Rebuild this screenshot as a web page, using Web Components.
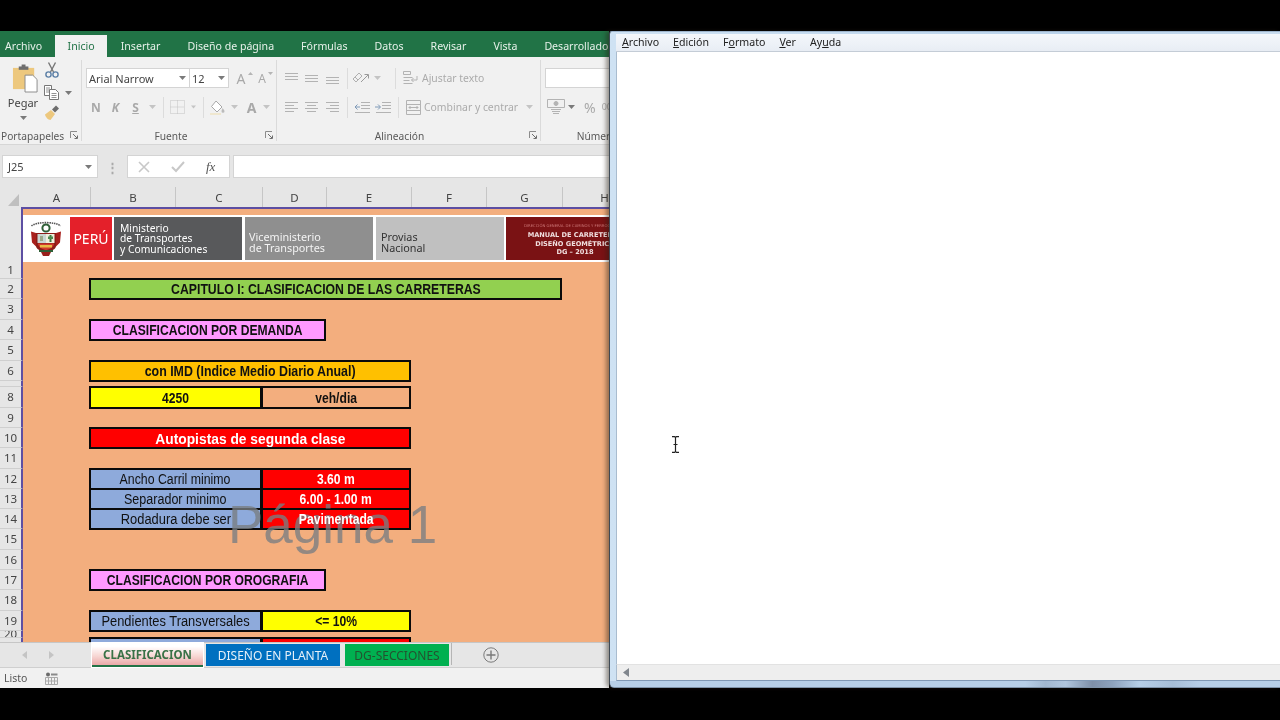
<!DOCTYPE html>
<html lang="es"><head><meta charset="utf-8"><title>Excel y Bloc de notas</title>
<style>
html,body{margin:0;padding:0;background:#000;width:1280px;height:720px;overflow:hidden}
</style></head><body>
<script>
const UI='"Noto Sans","Open Sans",sans-serif';
const ICONS={
paste:`<svg width="27" height="29" viewBox="0 0 28 30"><path d="M1 4h22v22H1z" fill="#edc87e"/><path d="M7 2.500h10v3.500H7z" fill="#6e6e6e"/><path d="M10 .5h4v3h-4z" fill="#6e6e6e"/><path d="M13.500 11.500h8l4.500 4.500v13h-12.500z" fill="#fff" stroke="#8a8a8a"/></svg>`,
cut:`<svg width="16" height="16" viewBox="0 0 16 16" fill="none" stroke="#5b7fa6" stroke-width="1.400"><path d="M4.500 .5 9.500 10M11.500 .5 6.500 10" stroke="#777"/><circle cx="4.500" cy="12.500" r="2.600"/><circle cx="11.500" cy="12.500" r="2.600"/></svg>`,
copy:`<svg width="15" height="15" viewBox="0 0 15 15" fill="#fff" stroke="#777"><path d="M.5.500h7v10h-7z"/><path d="M5.500 4.500h6l3 3v7h-9z"/><path d="M2 3h4M2 5h3M2 7h3M7.500 8.500h5M7.500 10.500h5M7.500 12.500h5" stroke-width=".8"/></svg>`,
brush:`<svg width="16" height="16" viewBox="0 0 16 16"><path d="M1 9.500 7 5l4 4-4.500 6C4 15 1.500 12 1 9.500z" fill="#edc87e"/><path d="M8 4.500l4-4 3 3-4 4z" fill="#6d6d6d"/></svg>`,
launch:`<svg width="8" height="8" viewBox="0 0 8 8" fill="none" stroke="#8c8c8c"><path d="M.5 7V.5H7"/><path d="M3 3l4 4M4.500 7.500h3v-3" stroke="#6e6e6e"/></svg>`,
al1:`<svg width="15" height="13" viewBox="0 0 15 13" stroke="#b3b3b3"><path d="M1 1.500h13M1 4.500h13M1 7.500h13"/></svg>`,
al2:`<svg width="15" height="13" viewBox="0 0 15 13" stroke="#b3b3b3"><path d="M1 3.500h13M1 6.500h13M1 9.500h13"/></svg>`,
al3:`<svg width="15" height="13" viewBox="0 0 15 13" stroke="#b3b3b3"><path d="M1 5.500h13M1 8.500h13M1 11.500h13"/></svg>`,
hl:`<svg width="15" height="13" viewBox="0 0 15 13" stroke="#b3b3b3"><path d="M1 1.500h13M1 4.500h9M1 7.500h13M1 10.500h9"/></svg>`,
hc:`<svg width="15" height="13" viewBox="0 0 15 13" stroke="#b3b3b3"><path d="M1 1.500h13M3 4.500h9M1 7.500h13M3 10.500h9"/></svg>`,
hr:`<svg width="15" height="13" viewBox="0 0 15 13" stroke="#b3b3b3"><path d="M1 1.500h13M5 4.500h9M1 7.500h13M5 10.500h9"/></svg>`,
orient:`<svg width="18" height="14" viewBox="0 0 18 14" fill="none" stroke="#b0b0b0"><path d="M1 8l6-6 3 3-6 6zM3 6l3 3"/><path d="M9 11l7-7M12.500 3.500h4v4" stroke="#9a9a9a"/></svg>`,
outd:`<svg width="16" height="13" viewBox="0 0 16 13" stroke="#b3b3b3" fill="none"><path d="M7 1.500h9M7 4.500h9M7 7.500h9M1 11.500h15"/><path d="M6 6H1M3.500 3.500 1 6l2.500 2.500" stroke="#7f9ab8"/></svg>`,
ind:`<svg width="16" height="13" viewBox="0 0 16 13" stroke="#b3b3b3" fill="none"><path d="M7 1.500h9M7 4.500h9M7 7.500h9M1 11.500h15"/><path d="M0 6h5M3 3.500 5.500 6 3 8.500" stroke="#7f9ab8"/></svg>`,
wrap:`<svg width="15" height="15" viewBox="0 0 15 15" fill="none" stroke="#b3b3b3"><path d="M.5 .5h7v3h-7zM.5 6.500h9M.5 9.500h6M.5 12.500h9M14 5v4H8.500M10.500 7 8.500 9l2 2"/></svg>`,
merge:`<svg width="15" height="15" viewBox="0 0 15 15" fill="none" stroke="#b3b3b3"><path d="M.5.500h14v14H.5zM.5 4.500h14M.5 10.500h14M3 7.500h9M4.500 6 3 7.500 4.500 9M10.500 6 12 7.500 10.500 9"/></svg>`,
acct:`<svg width="18" height="16" viewBox="0 0 18 16" fill="none" stroke="#b3b3b3"><path d="M.5.500h17v8H.5z"/><circle cx="9" cy="4.500" r="2" fill="#b3b3b3"/><path d="M4 10.500h10M5 12.500h8M6 14.500h6"/></svg>`,
border:`<svg width="15" height="14" viewBox="0 0 15 14" fill="none" stroke="#c2c2c2" stroke-dasharray="1 1"><path d="M.5.500h14v13H.5zM.5 7h14M7.500.500v13"/></svg>`,
fill:`<svg width="16" height="15" viewBox="0 0 16 15" fill="none"><path d="M6 1 1.500 6.500 7 12l5-5z" fill="#fff" stroke="#a8a8a8"/><path d="M12.500 8c1.500 1.800 2 2.600 2 3.300a1.500 1.500 0 0 1-3 0c0-.7.500-1.500 1-3.300z" fill="#bbb"/><path d="M0 13h11v2H0z" fill="#efe7cf"/></svg>`,
stats:`<svg width="13" height="13" viewBox="0 0 13 13" fill="none"><path d="M.5 5.500h12v7H.5zM3.500 5.500v7M6.500 5.500v7M9.500 5.500v7M.5 9h12" stroke="#a9a9a9"/><circle cx="3" cy="2.500" r="2" fill="#6b6b6b"/><path d="M6 1.500h6.500v2H6z" fill="#8a8a8a"/></svg>`,
plus:`<svg width="16" height="16" viewBox="0 0 16 16" fill="none" stroke="#7a7a7a"><circle cx="8" cy="8" r="7.200"/><path d="M8 3.500v9M3.500 8h9" stroke-width="1.400"/></svg>`,
check:`<svg width="14" height="12" viewBox="0 0 14 12" fill="none" stroke="#c8c8c8" stroke-width="2"><path d="M1 6l4 4 8-9"/></svg>`,
cross:`<svg width="12" height="12" viewBox="0 0 12 12" stroke="#c8c8c8" stroke-width="1.600"><path d="M1 1l10 10M11 1 1 11"/></svg>`,
caret:`<svg width="7" height="4" viewBox="0 0 7 4"><path d="M0 0h7L3.500 4z" fill="#7a7a7a"/></svg>`,
caretl:`<svg width="7" height="4" viewBox="0 0 7 4"><path d="M0 0h7L3.500 4z" fill="#c4c4c4"/></svg>`,
up:`<svg width="5" height="3" viewBox="0 0 5 3"><path d="M0 3h5L2.500 0z" fill="#b5b5b5"/></svg>`,
down:`<svg width="5" height="3" viewBox="0 0 5 3"><path d="M0 0h5L2.500 3z" fill="#b5b5b5"/></svg>`,
left:`<svg width="5" height="8" viewBox="0 0 5 8"><path d="M5 0v8L0 4z" fill="#c4c4c4"/></svg>`,
right:`<svg width="5" height="8" viewBox="0 0 5 8"><path d="M0 0v8l5-4z" fill="#c4c4c4"/></svg>`,
leftd:`<svg width="6" height="9" viewBox="0 0 6 9"><path d="M6 0v9L0 4.500z" fill="#80868d"/></svg>`,
corner:`<svg width="11" height="12" viewBox="0 0 11 12"><path d="M11 0v12H0z" fill="#bfbfbf"/></svg>`,
shield:`<svg width="32" height="38" viewBox="0 0 32 38">
<path d="M1.500 6C6 1.500 26 1.500 30.500 6" fill="none" stroke="#555" stroke-width="1.600" stroke-dasharray="1.500 .8"/>
<circle cx="16" cy="8" r="3.600" fill="none" stroke="#2e5e36" stroke-width="2"/>
<path d="M6 13 1 11.500l1 11 4.500 4.500zM26 13l5-1.500-1 11-4.500 4.500z" fill="#a8201d"/>
<path d="M6 13h20v13c0 3-4 5-10 6-6-1-10-3-10-6z" fill="#8c1c18"/>
<path d="M7.500 14H16v9H7.500z" fill="#c8d6d2"/><path d="M16 14h8.500v9H16z" fill="#eef0dc"/>
<path d="M10 16h3v5h-3z" fill="#9aa98a"/><path d="M19.500 15h2v7h-2z" fill="#3c7a45"/><path d="M18 16.500h5v2.500h-5z" fill="#4a8a4f"/>
<path d="M8 23.500h16c-.5 4-4.500 6-8 6.500-3.500-.5-7.500-2.500-8-6.500z" fill="#d03a2c"/>
<path d="M10 25h12v2.500H10z" fill="#e8bb45"/>
<path d="M11 32h10l-2 4h-6z" fill="#9a1f1b"/><path d="M9 30h14v2H9z" fill="#2e5e36"/></svg>`
};
function def(name,css,html,init){
  customElements.define(name,class extends HTMLElement{
    constructor(){super();this.attachShadow({mode:'open'});}
    connectedCallback(){
      if(!this._done){this._done=1;this.shadowRoot.innerHTML=`<style>${css}</style>${typeof html==='function'?html(this):html}`;}
      if(init)init(this);
    }
  });
}
customElements.define('x-ico',class extends HTMLElement{
  constructor(){super();this.attachShadow({mode:'open'});}
  connectedCallback(){
    this.shadowRoot.innerHTML=`<style>:host{display:inline-flex;align-items:center;justify-content:center;flex:none}svg{display:block}</style>`+ICONS[this.getAttribute('n')];
    const w=this.getAttribute('w');if(w)this.style.width=w+'px';
    const m=this.getAttribute('m');if(m)this.style.marginLeft=m+'px';
  }
});
def('x-desktop',`:host{display:block;position:relative;width:1280px;height:720px;background:#000;overflow:hidden;filter:blur(.3px)}`,`<slot></slot>`);
def('x-excel',`:host{position:absolute;left:0;top:31px;width:609px;height:657px;display:flex;flex-direction:column;background:#e6e6e6;overflow:hidden;font-family:${UI};color:#444}`,`<slot></slot>`);
def('x-tabs',`:host{display:flex;height:26px;flex:none;background:#217346;color:#fff;font-size:10.600px;white-space:nowrap;align-items:flex-end}`,`<slot></slot>`);
def('x-tab',`:host{display:block;padding:0 13.500px;height:22px;line-height:23px;color:#e7f1ea}:host(:first-child){padding-left:5px;padding-right:13px}:host([on]){background:#f1f1f1;color:#217346;padding:0 12.500px}`,`<slot></slot>`);
def('x-ribbon',`:host{display:flex;flex:none;height:87px;background:#f1f1f1;border-bottom:1px solid #d6d6d6;overflow:hidden}`,`<slot></slot>`);
def('rb-group',`:host{display:flex;flex-direction:column;flex:none;position:relative;border-right:1px solid #dadada;box-sizing:border-box;height:81px;margin-top:3px}
.c{height:68px;padding-top:8px;box-sizing:border-box;flex:none}
.l{text-align:center;font-size:10.200px;line-height:17px;color:#5a5a5a;white-space:nowrap}
.k{position:absolute;right:3px;bottom:2px;display:flex}`,
el=>`<div class="c"><slot></slot></div><div class="l" style="${el.getAttribute('ls')||''}">${el.getAttribute('label')}</div>${el.hasAttribute('launch')?`<div class="k">${ICONS.launch}</div>`:''}`,
el=>{el.style.width=el.getAttribute('w')+'px';});
def('rb-row',`:host{display:flex;align-items:center;height:20px;margin-bottom:9px;white-space:nowrap}`,`<slot></slot>`);
def('rb-box',`:host{display:flex;align-items:center;justify-content:space-between;box-sizing:border-box;height:20px;background:#fff;border:1px solid #d4d4d4;font-size:11px;color:#444;padding:0 3px 0 2px;flex:none}`,`<slot></slot>`,
el=>{el.style.width=el.getAttribute('w')+'px';});
def('rb-sep',`:host{display:block;width:1px;height:21px;background:#dcdcdc;flex:none}`,``);
def('rb-t',`:host{display:inline-block;flex:none;font-size:10.400px;line-height:22px;color:#ababab}`,`<slot></slot>`);
def('rb-l',`:host{display:block;flex:none;font:bold 12px ${UI};color:#a9a9a9;text-align:center}`,`<slot></slot>`);
def('x-clip',`:host{display:grid;grid-template-columns:44px 36px;height:68px;margin-top:-4px}
.p{display:flex;flex-direction:column;align-items:center;padding-left:6px}
.n{font-size:11px;color:#444;line-height:15px;margin:2px 0 0 -4px}
.r{display:flex;flex-direction:column;margin-top:-2px}
.a{margin:4px 0 0 -4px;line-height:0}
.q{display:flex;align-items:center;gap:6px;margin:7px 0 5px}`,
`<div class="p">${ICONS.paste}<div class="n">Pegar</div><div class="a">${ICONS.caret}</div></div>
<div class="r">${ICONS.cut}<div class="q">${ICONS.copy}${ICONS.caret}</div>${ICONS.brush}</div>`);
def('x-formula',`:host{display:flex;flex:none;height:23px;margin:10px 0 9px 2px;align-items:stretch}
.b{background:#fff;border:1px solid #d4d4d4;box-sizing:border-box;display:flex;align-items:center;flex:none}
.nm{width:96px;justify-content:space-between;font-size:11px;padding:0 5px;color:#444}
.dots{width:29px;flex:none;display:flex;align-items:center;justify-content:center;color:#aaa;font-size:13px;font-weight:bold}
.fn{width:103px;padding-left:10px;gap:21px}
.fx{font:italic 13px "Liberation Serif",serif;color:#555}
.in{width:400px;margin-left:3px}`,
`<div class="b nm">J25${ICONS.caret}</div><div class="dots">⋮</div><div class="b fn">${ICONS.cross}${ICONS.check}<span class="fx">fx</span></div><div class="b in"></div>`);
def('x-heads',`:host{display:grid;flex:none;height:20px;grid-template-columns:23px 68px 85px 87px 64px 85px 75px 76px 84px;background:#e6e6e6;font-size:11.500px;color:#444}
div{display:flex;align-items:center;justify-content:center;border-right:1px solid #c6c6c6;box-sizing:border-box}
.c{justify-content:flex-end;align-items:flex-end;padding:0 4px 1px 0;border-right:0}`,
`<div class="c">${ICONS.corner}</div>`+'ABCDEFGH'.split('').map(c=>`<div>${c}</div>`).join(''));
const ROWS=[72,20,21,20,21,20,6,21,20,20,21,20,20,20,21,20,20,21,20,7,11];
def('x-sheet',`:host{display:grid;position:relative;flex:none;height:435px;overflow:hidden;grid-template-columns:23px 67px 85px 87px 64px 85px 75px 76px 84px;grid-template-rows:${ROWS.map(r=>r+'px').join(' ')};background:#f3ae7e;font-family:"Liberation Sans",Arial,sans-serif}
.h{grid-column:1;background:#e6e6e6;border-right:2px solid #5d4fa3;border-bottom:1px solid #cfcfcf;box-sizing:border-box;display:flex;align-items:center;justify-content:center;font:11.500px/1 ${UI};color:#444;overflow:hidden}
.one{align-items:flex-end;padding-bottom:3px}
.top{position:absolute;left:22px;right:0;top:0;height:2px;background:#5d4fa3}
.wm{position:absolute;z-index:1;left:228px;top:291px;font:53px/1 "Liberation Sans",Arial,sans-serif;color:rgba(120,125,130,.78);white-space:nowrap;pointer-events:none}`,
()=>ROWS.map((r,i)=>i===6||i===20?`<div class="h" style="grid-row:${i+1}"></div>`:`<div class="h ${i===0?'one':''}" style="grid-row:${i+1}">${i+1}</div>`).join('')+`<slot></slot><div class="top"></div><div class="wm">Página 1</div>`);
def('x-cell',`:host{display:flex;align-items:center;justify-content:center;box-sizing:border-box;border:2px solid #0a0a0a;margin:-1px 0 -1px -1px;font-size:14px;color:#111;white-space:nowrap;overflow:hidden;--sx:.92}
span{display:inline-block;position:relative;z-index:2;transform:scaleX(var(--sx))}
:host([b]){font-weight:bold;--sx:.865}`,`<span><slot></slot></span>`,
el=>{el.style.gridRow=el.getAttribute('r');el.style.gridColumn=el.getAttribute('c');el.style.background=el.getAttribute('f');if(el.hasAttribute('w'))el.style.color='#fff';if(el.hasAttribute('sx'))el.style.setProperty('--sx',el.getAttribute('sx'));if(el.hasAttribute('fs'))el.style.fontSize=el.getAttribute('fs')+'px';});
def('x-banner',`:host{grid-row:1;grid-column:2/-1;display:flex;height:47px;margin-top:8px;background:#fff;padding:2px 0;box-sizing:border-box;font-family:"Noto Sans","DejaVu Sans",sans-serif;gap:2px;white-space:nowrap}
.e{width:45px;flex:none;display:flex;align-items:center;justify-content:center;margin-right:-2px}
.pe{width:42px;flex:none;background:#e4202a;color:#fff;font-size:14px;display:flex;align-items:center;justify-content:center;margin-left:2px}
.m{width:128px;flex:none;box-sizing:border-box;font-size:10.300px;line-height:10.500px;padding-left:6px;display:flex;flex-direction:column;justify-content:center}
.a{background:#58595b;color:#fff}.b{background:#8f8f8f;color:#f3f3f3;padding:8px 0 0 4px;margin-left:1px;font-size:10.800px}.c{background:#c0c0c0;color:#333;padding:8px 0 0 5px;margin-left:1px;font-size:10.800px}
.d{width:138px;flex:none;background:#7a1214;color:#f0dede;font:bold 6.600px/8.500px "DejaVu Sans",sans-serif;text-align:center;padding-top:6px;box-sizing:border-box}
.d i{display:block;font:normal 3.800px/5px "DejaVu Sans",sans-serif;color:#c77;margin-bottom:3px}`,
`<div class="e">${ICONS.shield}</div><div class="pe">PERÚ</div><div class="m a"><div>Ministerio</div><div>de Transportes</div><div>y Comunicaciones</div></div><div class="m b"><div>Viceministerio</div><div>de Transportes</div></div><div class="m c"><div>Provias</div><div>Nacional</div></div><div class="d"><i>DIRECCIÓN GENERAL DE CAMINOS Y FERROCARRILES</i>MANUAL DE CARRETERAS<br>DISEÑO GEOMÉTRICO<br>DG – 2018</div>`);
def('x-sheetbar',`:host{display:flex;flex:none;height:26px;background:#e6e6e6;border-top:1px solid #c6c6c6;box-sizing:border-box;border-bottom:1px solid #cfcfcf;font-size:12px;align-items:flex-start;white-space:nowrap}
.nav{width:92px;height:24px;flex:none;display:flex;align-items:center;padding-left:22px;gap:22px;box-sizing:border-box}
.t{height:22px;display:flex;align-items:center;justify-content:center;flex:none;box-sizing:border-box}
.a{width:111px;background:linear-gradient(#fff 15%,#f7d6d3 60%,#e9a9a8);color:#3a7247;font-weight:bold;font-size:11.500px;border-bottom:2px solid #217346;height:24px;box-shadow:0 0 0 1px #fff}
.b{width:134px;background:#0070c0;color:#e6f0f8;margin-left:3px;margin-top:1px}
.c{width:104px;background:#00b050;color:#24512f;margin-left:5px;margin-top:1px}
.s{width:1px;height:22px;background:#b5b5b5;margin-left:2px;flex:none}
.p{margin-left:31px;line-height:0;margin-top:4px}`,
`<div class="nav">${ICONS.left}${ICONS.right}</div><div class="t a">CLASIFICACION</div><div class="t b">DISEÑO EN PLANTA</div><div class="t c">DG-SECCIONES</div><div class="s"></div><div class="p">${ICONS.plus}</div>`);
def('x-status',`:host{display:flex;flex:none;height:20px;background:#f1f1f1;align-items:center;font-size:10.500px;color:#555;padding-left:4px;gap:18px}`,`Listo${ICONS.stats}`);
def('x-notepad',`:host{position:absolute;left:609px;top:31px;width:671px;height:657px;display:flex;flex-direction:column;background:linear-gradient(90deg,#b7cfe7 0,#b7cfe7 62%,#a2b8d0 65%,#b0c6de 68%,#7f90a8 72%,#8ea3bd 75%,#b7cfe7 79%,#a8bfd8 84%,#b7cfe7 88%) 0 100%/100% 6px no-repeat,linear-gradient(90deg,#cfe2f3 0,#b9d2ea 70%,#c9dcee 100%);box-sizing:border-box;border-left:1px solid #3f4a55;border-top:1px solid #9db4cc;border-bottom:1px solid #7f93a8;padding:2px 0 6px 6px;border-radius:3px 0 0 5px;font-family:${UI};box-shadow:-3px 0 4px rgba(40,30,20,.45)}`,`<slot></slot>`);
def('x-menu',`:host{display:flex;flex:none;height:18px;box-sizing:border-box;padding:0 0 1px 6px;background:linear-gradient(#f4f7fb,#e8edf4);border-bottom:1px solid #c4ccd6;font-size:10.600px;color:#222;align-items:center;gap:14px;white-space:nowrap}`,`<slot></slot>`);
def('x-item',`:host{display:block}`,`<slot></slot>`);
def('x-edit',`:host{display:block;flex:1;background:#fff;position:relative;border-left:1px solid #a9bccf;box-sizing:border-box}
.c{position:absolute;left:54px;top:384px;line-height:0}`,`<div class="c"><svg width="9" height="17" viewBox="0 0 9 17" fill="none" stroke="#222" stroke-width="1.200"><path d="M1 .6h2.500L4.500 1.500 5.500.6H8M4.500 1.500v14M1 16.400h2.500l1-.9 1 .9H8M2.500 8.500h4"/></svg></div>`);
def('x-hscroll',`:host{display:flex;flex:none;height:17px;background:#eeeeee;border-top:1px solid #e2e2e2;border-left:1px solid #a9bccf;border-bottom:1px solid #8098b4;box-sizing:border-box;align-items:center;padding-left:6px}`,`${ICONS.leftd}`);
</script>

<x-desktop>
  <x-excel>
    <x-tabs>
      <x-tab>Archivo</x-tab><x-tab on>Inicio</x-tab><x-tab>Insertar</x-tab><x-tab>Diseño de página</x-tab><x-tab>Fórmulas</x-tab><x-tab>Datos</x-tab><x-tab>Revisar</x-tab><x-tab>Vista</x-tab><x-tab>Desarrollador</x-tab>
    </x-tabs>
    <x-ribbon>
      <rb-group w="82" label="Portapapeles" launch ls="text-align:left;padding-left:1px"><x-clip></x-clip></rb-group>
      <rb-group w="195" label="Fuente" launch ls="padding-right:16px">
        <rb-row>
          <rb-box w="104" style="margin-left:4px">Arial Narrow<x-ico n="caret"></x-ico></rb-box>
          <rb-box w="40" style="margin-left:-1px">12<x-ico n="caret"></x-ico></rb-box>
          <rb-l style="width:20px;font-size:14px;font-weight:normal;margin-left:2px">A</rb-l><x-ico n="up" style="align-self:flex-start;margin:4px 0 0 -3px"></x-ico><rb-l style="width:18px;font-size:12px;font-weight:normal;margin-left:0">A</rb-l><x-ico n="down" style="align-self:flex-start;margin:4px 0 0 -3px"></x-ico>
        </rb-row>
        <rb-row>
          <rb-l style="width:20px;margin-left:4px">N</rb-l><rb-l style="width:19px;font-style:italic">K</rb-l><rb-l style="width:21px;text-decoration:underline">S</rb-l>
          <x-ico n="caretl" w="12"></x-ico>
          <rb-sep style="margin-left:5px"></rb-sep>
          <x-ico n="border" w="27"></x-ico><x-ico n="caretl" w="5"></x-ico>
          <rb-sep style="margin-left:7px"></rb-sep>
          <x-ico n="fill" w="27"></x-ico><x-ico n="caretl" w="7"></x-ico>
          <rb-l style="width:23px;font-size:14px;margin-left:2px">A</rb-l><x-ico n="caretl" w="7"></x-ico>
        </rb-row>
      </rb-group>
      <rb-group w="264" label="Alineación" launch ls="padding-right:18px">
        <rb-row>
          <x-ico n="al1" w="20" m="4"></x-ico><x-ico n="al2" w="21"></x-ico><x-ico n="al3" w="20"></x-ico>
          <rb-sep style="margin-left:5px"></rb-sep>
          <x-ico n="orient" w="26"></x-ico><x-ico n="caretl" w="7"></x-ico>
          <rb-sep style="margin-left:14px"></rb-sep>
          <x-ico n="wrap" m="7"></x-ico><rb-t style="margin-left:4px">Ajustar texto</rb-t>
        </rb-row>
        <rb-row>
          <x-ico n="hl" w="20" m="4"></x-ico><x-ico n="hc" w="21"></x-ico><x-ico n="hr" w="20"></x-ico>
          <rb-sep style="margin-left:5px"></rb-sep>
          <x-ico n="outd" w="21" m="3"></x-ico><x-ico n="ind" w="21"></x-ico>
          <rb-sep style="margin-left:5px"></rb-sep>
          <x-ico n="merge" m="7"></x-ico><rb-t style="margin-left:3px">Combinar y centrar</rb-t><x-ico n="caretl" m="8"></x-ico>
        </rb-row>
      </rb-group>
      <rb-group w="90" label="Número" ls="padding-left:22px">
        <rb-row><rb-box w="80" style="margin-left:4px"></rb-box></rb-row>
        <rb-row>
          <x-ico n="acct" m="6"></x-ico><x-ico n="caret" m="3"></x-ico><rb-l style="margin-left:9px;font-weight:normal;font-size:14px">%</rb-l><rb-t style="margin-left:6px;font-size:9px">00</rb-t>
        </rb-row>
      </rb-group>
    </x-ribbon>
    <x-formula></x-formula>
    <x-heads></x-heads>
    <x-sheet>
      <x-banner></x-banner>
      <x-cell r="2" c="3/9" f="#92d050" b sx=".875">CAPITULO I: CLASIFICACION DE LAS CARRETERAS</x-cell>
      <x-cell r="4" c="3/6" f="#ff99ff" b>CLASIFICACION POR DEMANDA</x-cell>
      <x-cell r="6" c="3/7" f="#ffc000" b sx=".885">con IMD (Indice Medio Diario Anual)</x-cell>
      <x-cell r="8" c="3/5" f="#ffff00" b>4250</x-cell>
      <x-cell r="8" c="5/7" f="#f3ae7e" b>veh/dia</x-cell>
      <x-cell r="10" c="3/7" f="#ff0000" b w fs="15" sx=".92">Autopistas de segunda clase</x-cell>
      <x-cell r="12" c="3/5" f="#8eaadb" sx=".88">Ancho Carril minimo</x-cell>
      <x-cell r="12" c="5/7" f="#ff0000" b w>3.60 m</x-cell>
      <x-cell r="13" c="3/5" f="#8eaadb" sx=".895">Separador minimo</x-cell>
      <x-cell r="13" c="5/7" f="#ff0000" b w>6.00 - 1.00 m</x-cell>
      <x-cell r="14" c="3/5" f="#8eaadb">Rodadura debe ser</x-cell>
      <x-cell r="14" c="5/7" f="#ff0000" b w>Pavimentada</x-cell>
      <x-cell r="17" c="3/6" f="#ff99ff" b>CLASIFICACION POR OROGRAFIA</x-cell>
      <x-cell r="19" c="3/5" f="#8eaadb">Pendientes Transversales</x-cell>
      <x-cell r="19" c="5/7" f="#ffff00" b>&lt;= 10%</x-cell>
      <x-cell r="21" c="3/5" f="#8eaadb"></x-cell>
      <x-cell r="21" c="5/7" f="#ff0000"></x-cell>
    </x-sheet>
    <x-sheetbar></x-sheetbar>
    <x-status></x-status>
  </x-excel>
  <x-notepad>
    <x-menu>
      <x-item><u>A</u>rchivo</x-item><x-item><u>E</u>dición</x-item><x-item>F<u>o</u>rmato</x-item><x-item><u>V</u>er</x-item><x-item>Ay<u>u</u>da</x-item>
    </x-menu>
    <x-edit></x-edit>
    <x-hscroll></x-hscroll>
  </x-notepad>
</x-desktop>
</body></html>
